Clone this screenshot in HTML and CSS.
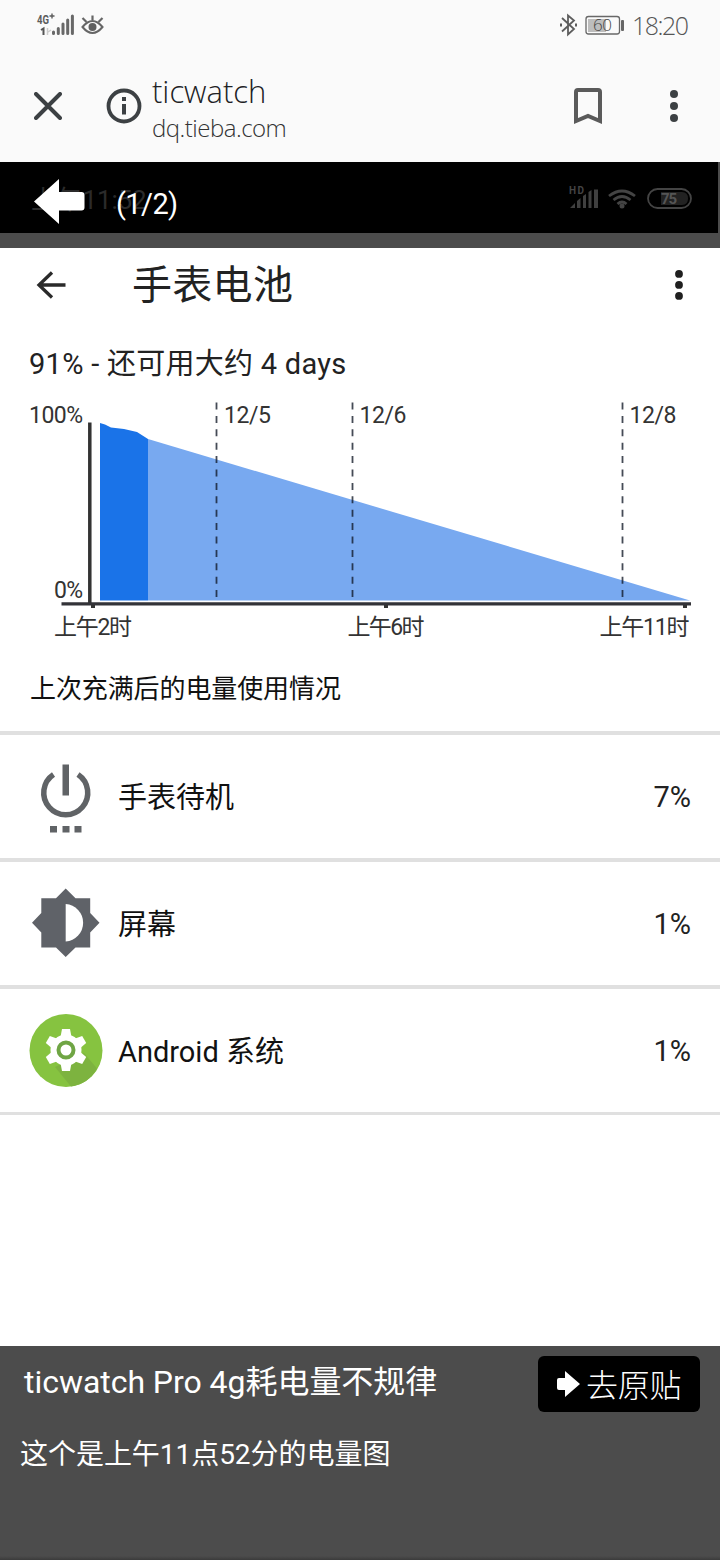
FILE: index.html
```html
<!DOCTYPE html>
<html lang="zh-CN">
<head>
<meta charset="utf-8">
<title>ticwatch</title>
<link rel="stylesheet" href="styles.css">
</head>
<body>
<header class="browser">
  <div class="status">
    <svg class="status-left" width="70" height="26" viewBox="36 12 70 26">
      <text x="37" y="23.5" class="net" textLength="12" lengthAdjust="spacingAndGlyphs">4G</text>
      <path d="M49.500 16h5M52 13.500v5" stroke="#5c5c5c" stroke-width="1.400"/>
      <path d="M41 30l2.500-1.500V35" fill="none" stroke="#555" stroke-width="2"/>
      <path d="M47.500 28v7M48 32l3-2" stroke="#ccc" stroke-width="1.500"/>
      <path d="M53.500 32v1.500M58.300 28.500v5M63 24v9.500M67.700 20v13.500M72.400 16v17.500" stroke="#686868" stroke-width="3" stroke-linecap="round"/>
      <path d="M82.500 27q10-12 20 0q-10 12-20 0z" fill="none" stroke="#666" stroke-width="2"/>
      <circle cx="92.500" cy="27" r="4" fill="#606060"/>
      <path d="M92.500 20v-4.500M86.500 22l-4-4M98.500 22l4-4" stroke="#666" stroke-width="2.200"/>
    </svg>
    <div class="status-right">
      <svg width="66" height="26" viewBox="559 12 66 26">
        <path d="M562 18l12 11-6 5.500v-19l6 5-12 11" fill="none" stroke="#5d5d5d" stroke-width="1.800"/>
        <path d="M560 23.500h2v3h-2zM575 23.500h2v3h-2z" fill="#5d5d5d"/>
        <rect x="586" y="16.500" width="33.500" height="17.500" rx="2.500" fill="none" stroke="#686868" stroke-width="1.300"/>
        <rect x="588" y="19" width="18" height="13" fill="#bdbdbd"/>
        <rect x="621" y="20" width="3" height="11" rx="1" fill="#666"/>
        <text x="593" y="31" class="level" textLength="19">60</text>
      </svg>
      <span class="clock">18:20</span>
    </div>
  </div>
  <div class="toolbar">
    <svg class="ico-close" width="28" height="28" viewBox="0 0 28 28"><path d="M2 2l24 24M26 2L2 26" stroke="#3c4043" stroke-width="4" stroke-linecap="round"/></svg>
    <svg class="ico-info" width="36" height="36" viewBox="0 0 36 36"><circle cx="18" cy="18" r="15.500" fill="none" stroke="#3c4043" stroke-width="3.800"/><path d="M16 9h4v4h-4zM16 16h4v10.500h-4z" fill="#3c4043"/></svg>
    <div class="site">
      <div class="site-title">ticwatch</div>
      <div class="site-url">dq.tieba.com</div>
    </div>
    <svg class="ico-mark" width="28" height="36" viewBox="0 0 28 36"><path d="M2 33V4q0-2 2-2h20q2 0 2 2v29l-12-5z" fill="none" stroke="#5a5a5a" stroke-width="4"/></svg>
    <svg class="ico-more" width="8" height="32" viewBox="0 0 8 32" fill="#3c4043"><circle cx="4" cy="4" r="4"/><circle cx="4" cy="16" r="4"/><circle cx="4" cy="28" r="4"/></svg>
  </div>
</header>

<section class="viewer">
  <svg class="back" width="52" height="46" viewBox="0 0 52 46"><path d="M0 22.500L25 0v13H47.500q3 0 3 3v12.500q0 3-3 3H25v13.500z" fill="#fff"/></svg>
  <span class="count">(1/2)</span>
  <span class="ghost-time">上午11:52</span>
  <svg class="ghost-icons" width="126" height="28" viewBox="568 184 126 28">
    <text x="569" y="194" class="hd" textLength="15">HD</text>
    <path d="M570 208l5-5v5zM577 201l3.500-3v10H577zM583 196l3-2v14h-3zM588.500 192l3-2v18h-3zM594 189.500h4V208h-4z" fill="#404040"/>
    <path d="M609 196q13-10 26 0M613.500 200q8.500-7 17 0M617.500 204q4.500-4 9 0" fill="none" stroke="#444" stroke-width="2.800"/>
    <circle cx="622" cy="206" r="2.500" fill="#444"/>
    <rect x="648" y="189" width="43" height="19" rx="9.500" fill="none" stroke="#444" stroke-width="1.800"/>
    <path d="M661 192h21q6 0 6 6.500t-6 6.500h-21z" fill="#222"/>
    <text x="661" y="204" class="pct" textLength="16">75</text>
  </svg>
</section>

<main class="sheet">
  <div class="appbar">
    <svg class="ico-back" width="30" height="28" viewBox="0 0 30 28"><path d="M29.500 14H3M16 1.500L3 14l13 12.500" fill="none" stroke="#2a2a2a" stroke-width="3.300"/></svg>
    <h1>手表电池</h1>
    <svg class="ico-dots" width="8" height="31" viewBox="0 0 8 31" fill="#1f1f1f"><circle cx="4" cy="3.900" r="3.900"/><circle cx="4" cy="14.900" r="3.900"/><circle cx="4" cy="25.900" r="3.900"/></svg>
  </div>
  <p class="estimate">91% - 还可用大约 4 days</p>
  <svg class="chart" width="720" height="250" viewBox="0 396 720 250">
    <path d="M148 439L690 600.500H148z" fill="#78a9f0"/>
    <path d="M100 423l5 1.500 6 3 13 1.500 13 3 11 7V600.500H100z" fill="#1a73e8"/>
    <path d="M216.500 402.500V598M352.500 402.500V598M622.500 402.500V598" stroke="#111827" stroke-opacity=".78" stroke-width="1.800" stroke-dasharray="7 6.400"/>
    <path d="M89.800 422.500V604" stroke="#333" stroke-width="3.500"/>
    <path d="M61.500 603.800H691" stroke="#333338" stroke-width="3.300"/>
    <path d="M93 605v3M386 605v3M685 605v3" stroke="#333" stroke-width="4"/>
    <g class="chart-labels">
      <text x="29" y="422.500" textLength="54">100%</text>
      <text x="54" y="597.500" textLength="29">0%</text>
      <text x="224" y="423" textLength="47">12/5</text>
      <text x="359.500" y="423" textLength="47">12/6</text>
      <text x="629.500" y="423" textLength="47">12/8</text>
      <text x="54" y="634.500" textLength="78">上午2时</text>
      <text x="347.500" y="634.500" textLength="77">上午6时</text>
      <text x="599.500" y="634.500" textLength="90">上午11时</text>
    </g>
  </svg>
  <h2>上次充满后的电量使用情况</h2>
  <ul class="usage">
    <li>
      <svg width="74" height="74" viewBox="29 760 74 74"><path d="M53.500 774.500a22 22 0 1 0 24.500 0" fill="none" stroke="#606366" stroke-width="5.500"/><path d="M62.500 764.500h6.500v31h-6.500zM50 826h7v6.500h-7zM62.500 826h7v6.500h-7zM74.500 826h7v6.500h-7z" fill="#606366"/></svg>
      <span class="name">手表待机</span><span class="value">7%</span>
    </li>
    <li>
      <svg width="74" height="74" viewBox="29 887 74 74"><path d="M65.700 888.500L75.500 898.300H90.200V913L99.500 922.800 90.200 932.500V947.500H75.500L65.700 957 56 947.500H41.300V932.500L32 922.800 41.300 913V898.300H56z" fill="#5f6268"/><path d="M65.700 904a18.800 18.800 0 0 1 0 37.500z" fill="#fff"/></svg>
      <span class="name">屏幕</span><span class="value">1%</span>
    </li>
    <li>
      <svg width="74" height="74" viewBox="29 1014 74 74">
        <circle cx="66" cy="1050.500" r="36.500" fill="#86c340"/>
        <path d="M55 1067l16 19.500q18-3 26-18L84 1053z" fill="#7db33f"/>
        <g transform="translate(66 1050)" fill="#fff"><circle r="15.500"/><path id="tooth" d="M-5.500-13L-4-21H4L5.500-13z"/><use href="#tooth" transform="rotate(60)"/><use href="#tooth" transform="rotate(120)"/><use href="#tooth" transform="rotate(180)"/><use href="#tooth" transform="rotate(240)"/><use href="#tooth" transform="rotate(300)"/></g>
        <circle cx="66" cy="1050" r="7.500" fill="#fff" stroke="#6fa544" stroke-width="4"/>
      </svg>
      <span class="name">Android 系统</span><span class="value">1%</span>
    </li>
  </ul>
</main>

<footer class="caption">
  <div class="caption-head">
    <div class="caption-title">ticwatch Pro 4g耗电量不规律</div>
    <div class="origin">
      <svg width="23" height="26" viewBox="0 0 23 26"><path d="M0 9q0-2 2-2h6V0l15 13L8 26v-7H2q-2 0-2-2z" fill="#fff"/></svg>
      <span>去原贴</span>
    </div>
  </div>
  <p>这个是上午11点52分的电量图</p>
</footer>
</body>
</html>
```

FILE: styles.css
```css
* { box-sizing: border-box; margin: 0; padding: 0; }
body {
  width: 720px; height: 1560px; overflow: hidden;
  display: flex; flex-direction: column;
  font-family: Roboto, "Noto Sans CJK SC", sans-serif;
  background: #fff; color: #222;
}
svg { display: block; flex: none; }
h1, h2 { font-weight: 400; }

.browser { height: 162px; background: #fafafa; }
.status {
  height: 50px; padding: 0 34px 0 36px;
  display: flex; justify-content: space-between; align-items: center;
}
.status-right { display: flex; align-items: center; gap: 7px; }
.clock { width: 54px; font: 300 25px/30px "Open Sans", sans-serif; color: #555; letter-spacing: -1.5px; white-space: nowrap; }
.net { font: 700 13px Roboto, sans-serif; fill: #5c5c5c; }
.level { font: 300 17px "Open Sans", sans-serif; fill: #444; }
.toolbar { height: 112px; padding: 2px 42px 0 34px; display: flex; align-items: flex-start; }
.ico-close { margin-top: 40px; }
.ico-info { margin: 36px 0 0 44px; }
.site { flex: 1; margin-left: 10px; padding-top: 19px; font-family: "Open Sans", sans-serif; font-weight: 300; }
.site-title { font-size: 31px; line-height: 40px; color: #202124; }
.site-url { padding-top: 1px; font-size: 24px; line-height: 32px; letter-spacing: -.5px; color: #333; }
.ico-mark { margin: 36px 68px 0 0; }
.ico-more { margin-top: 38px; }

.viewer {
  position: relative; height: 86px; padding: 17px 0 0 34px;
  display: flex; align-items: flex-start;
  background: #4c4c4c linear-gradient(#000, #000) 0 0 / 718px 71px no-repeat;
}
.back { z-index: 1; }
.count { z-index: 1; margin: 7px 0 0 30px; font-size: 29px; line-height: 36px; letter-spacing: -.6px; color: #fff; }
.ghost-time { position: absolute; left: 31px; top: 20px; font-size: 26px; line-height: 36px; letter-spacing: -.2px; color: #2b2b2b; }
.ghost-icons { position: absolute; left: 568px; top: 22px; }
.hd { font: 700 10px Roboto, sans-serif; fill: #444; }
.pct { font: 700 15px Roboto, sans-serif; fill: #555; }

.sheet { height: 1098px; background: #fff; }
.appbar { height: 74px; padding: 0 37px 0 36px; display: flex; align-items: center; }
.appbar h1 { flex: 1; margin-left: 66px; padding-top: 2px; font-size: 40px; line-height: 60px; letter-spacing: .3px; }
.estimate { height: 74px; padding: 22px 0 0 29px; font-size: 29px; line-height: 40px; letter-spacing: .28px; color: #222; }
.chart-labels { font-size: 23px; fill: #333; }
.sheet h2 { height: 85px; padding: 23px 0 0 30px; font-size: 26px; line-height: 40px; letter-spacing: -.1px; color: #111; }
.usage { list-style: none; border-top: 4px solid #e0e0e0; }
.usage li { height: 127px; padding: 0 29px; display: flex; align-items: center; border-bottom: 4px solid #e0e0e0; }
.usage li:last-child { border-bottom-width: 3px; height: 126px; }
.name { flex: 1; margin-left: 15px; padding-top: 3px; font-size: 29px; line-height: 40px; color: #111; }
.value { padding-top: 1px; font-size: 29px; line-height: 40px; color: #222; }

.caption { height: 214px; background: linear-gradient(#4c4c4c 210px, #3b3b3b); color: #fff; }
.caption-head { height: 76px; padding: 10px 20px 0 24px; display: flex; justify-content: space-between; }
.caption-title { padding-top: 4px; font-size: 32px; line-height: 44px; letter-spacing: -.04px; }
.origin {
  width: 162px; height: 56px; border-radius: 6px; background: #000;
  display: flex; align-items: center; padding-left: 19px; gap: 6px;
  font-size: 32px; line-height: 44px; font-weight: 300;
}
.origin span { padding-top: 3px; letter-spacing: -.2px; }
.caption p { padding: 12px 0 0 20px; font-size: 28px; line-height: 42px; letter-spacing: -.04px; }
```
